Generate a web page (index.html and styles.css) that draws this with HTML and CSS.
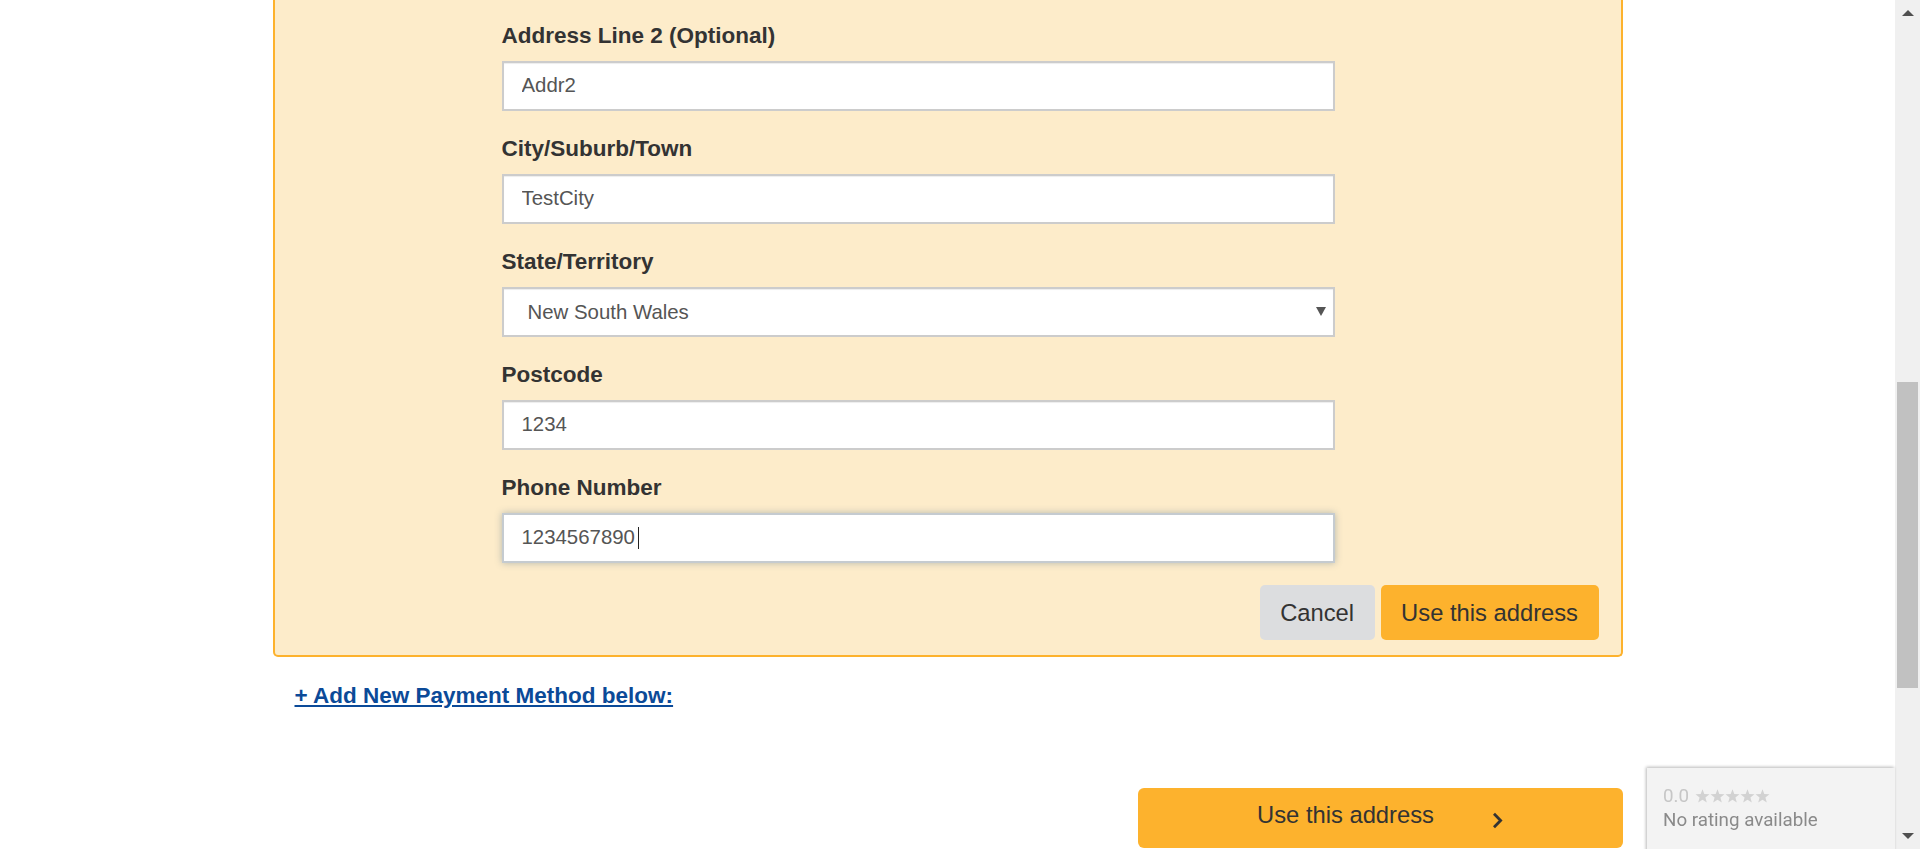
FILE: index.html
```html
<!DOCTYPE html>
<html lang="en">
<head>
<meta charset="utf-8">
<title>Checkout – Delivery address</title>
<link rel="stylesheet" href="styles.css">
</head>
<body>
<div class="viewport">
  <main class="page">
    <div class="container">
      <section class="address-card">
        <form class="address-form">
          <div class="form-group">
            <label class="form-label" for="addr2">Address Line 2 (Optional)</label>
            <input class="form-control" id="addr2" type="text" value="Addr2">
          </div>
          <div class="form-group">
            <label class="form-label" for="city">City/Suburb/Town</label>
            <input class="form-control" id="city" type="text" value="TestCity">
          </div>
          <div class="form-group">
            <label class="form-label" for="state">State/Territory</label>
            <div class="select-wrap">
              <select class="form-control form-select" id="state">
                <option selected>New South Wales</option>
                <option>Victoria</option>
                <option>Queensland</option>
              </select>
              <span class="select-arrow"></span>
            </div>
          </div>
          <div class="form-group">
            <label class="form-label" for="postcode">Postcode</label>
            <input class="form-control" id="postcode" type="text" value="1234">
          </div>
          <div class="form-group">
            <label class="form-label" for="phone">Phone Number</label>
            <div class="input-wrap">
              <input class="form-control is-focused" id="phone" type="text" value="1234567890">
              <span class="text-caret"></span>
            </div>
          </div>
        </form>
        <div class="card-actions">
          <button type="button" class="btn btn-cancel">Cancel</button>
          <button type="button" class="btn btn-primary">Use this address</button>
        </div>
      </section>

      <div class="add-payment-row">
        <a class="add-payment" href="#">+ Add New Payment Method below:</a>
      </div>

      <div class="checkout-actions">
        <button type="button" class="btn-continue">
          <span class="btn-continue-label">Use this address</span>
          <svg class="chevron" width="11" height="17" viewBox="0 0 11 17" aria-hidden="true">
            <polyline points="2,1.8 8.6,8.5 2,15.2" fill="none" stroke="#333" stroke-width="2.8" stroke-linecap="butt" stroke-linejoin="miter"/>
          </svg>
        </button>
      </div>
    </div>
  </main>

  <div class="scrollbar" aria-hidden="true">
    <div class="sb-btn"><span class="sb-arrow-up"></span></div>
    <div class="sb-track"><div class="sb-thumb"></div></div>
    <div class="sb-btn"><span class="sb-arrow-down"></span></div>
  </div>
</div>

<aside class="rating-badge">
  <div class="rating-line">
    <span class="rating-score">0.0</span>
    <svg class="rating-stars" width="76" height="14" viewBox="0 0 76 14" aria-hidden="true">
      <defs>
        <polygon id="star" points="7.5,0.3 9.3,5.1 14.5,5.3 10.4,8.5 11.8,13.6 7.5,10.7 3.2,13.6 4.6,8.5 0.5,5.3 5.7,5.1"/>
      </defs>
      <use href="#star" x="0" fill="#d2d2d2"/>
      <use href="#star" x="15" fill="#d2d2d2"/>
      <use href="#star" x="30" fill="#d2d2d2"/>
      <use href="#star" x="45" fill="#d2d2d2"/>
      <use href="#star" x="60" fill="#d2d2d2"/>
    </svg>
  </div>
  <div class="rating-text">No rating available</div>
</aside>
</body>
</html>
```

FILE: styles.css
```css
* {
  box-sizing: border-box;
}

html,
body {
  margin: 0;
  padding: 0;
  height: 100%;
}

body {
  font-family: "Liberation Sans", Arial, Helvetica, sans-serif;
  color: #333;
  background: #fff;
  overflow: hidden;
}

.viewport {
  display: flex;
  height: 849px;
}

.page {
  flex: 1;
  min-width: 0;
}

.container {
  width: 1350px;
  margin: 0 auto;
}

/* ---------- address card ---------- */
.address-card {
  background: #fdecca;
  border: 2px solid #fdb22d;
  border-top: 0;
  border-radius: 0 0 5px 5px;
  padding: 22.5px 22px 15px 227px;
}

.address-form {
  width: 833px;
  display: flex;
  flex-direction: column;
  gap: 25px;
}

.form-group {
  display: flex;
  flex-direction: column;
}

.form-label {
  display: block;
  font-size: 22.5px;
  font-weight: 700;
  line-height: 26px;
  margin-bottom: 12px;
  color: #333;
}

.form-control {
  display: block;
  width: 100%;
  height: 50px;
  margin: 0;
  padding: 0 18px;
  border: 2px solid #cccccc;
  border-radius: 0;
  background: #fff;
  font-family: inherit;
  font-size: 20.4px;
  color: #555;
  box-shadow: inset 0 1px 1px rgba(0, 0, 0, 0.075);
  outline: none;
}

.select-wrap,
.input-wrap {
  position: relative;
}

.form-select {
  appearance: none;
  -webkit-appearance: none;
  padding-left: 24px;
  cursor: pointer;
}

.select-arrow {
  position: absolute;
  right: 9px;
  top: 20.5px;
  width: 0;
  height: 0;
  border-left: 5px solid transparent;
  border-right: 5px solid transparent;
  border-top: 9px solid #555;
  pointer-events: none;
}

.form-control.is-focused {
  border-color: #c5cbd0;
  box-shadow: 0 0 7px rgba(90, 120, 140, 0.45);
}

.text-caret {
  position: absolute;
  left: 136px;
  top: 14px;
  width: 1px;
  height: 22px;
  background: #222;
}

.card-actions {
  display: flex;
  justify-content: flex-end;
  gap: 6px;
  margin-top: 22.5px;
}

.btn {
  height: 55px;
  padding: 0 20.5px;
  border: 0;
  border-radius: 5px;
  font-family: inherit;
  font-size: 23.75px;
  color: #333;
  cursor: pointer;
}

.btn-cancel {
  background: #dcdddf;
}

.btn-primary {
  background: #fdb22d;
}

/* ---------- link ---------- */
.add-payment-row {
  margin-top: 25.5px;
  padding-left: 22px;
  line-height: 26px;
}

.add-payment {
  font-size: 22.5px;
  font-weight: 700;
  color: #0b4a98;
  text-decoration: underline;
}

/* ---------- continue button ---------- */
.checkout-actions {
  display: flex;
  justify-content: flex-end;
  margin-top: 77.5px;
}

.btn-continue {
  width: 485px;
  height: 60px;
  display: flex;
  justify-content: center;
  align-items: flex-start;
  padding: 12.5px 0 0;
  border: 0;
  border-radius: 6px;
  background: #fdb22d;
  font-family: inherit;
  font-size: 23.75px;
  color: #333;
  cursor: pointer;
}

.btn-continue-label {
  line-height: 27px;
}

.chevron {
  display: block;
  margin-left: 58px;
  margin-top: 11.5px;
}

/* ---------- fake window scrollbar ---------- */
.scrollbar {
  width: 25px;
  height: 849px;
  background: #f0f0f0;
  display: flex;
  flex-direction: column;
  flex-shrink: 0;
}

.sb-btn {
  height: 25px;
  display: flex;
  align-items: center;
  justify-content: center;
}

.sb-arrow-up {
  width: 0;
  height: 0;
  border-left: 6px solid transparent;
  border-right: 6px solid transparent;
  border-bottom: 6px solid #505050;
}

.sb-arrow-down {
  width: 0;
  height: 0;
  border-left: 6px solid transparent;
  border-right: 6px solid transparent;
  border-top: 6px solid #505050;
  margin-top: -2px;
}

.sb-track {
  flex: 1;
  padding: 357px 2px 0;
}

.sb-thumb {
  height: 306px;
  background: #c1c1c1;
}

/* ---------- rating badge (overlay) ---------- */
.rating-badge {
  position: fixed;
  top: 768px;
  right: 25px;
  width: 248px;
  height: 100px;
  padding: 16px 16px 0;
  background: #f3f3f3;
  box-shadow: -1px -1px 3px rgba(0, 0, 0, 0.28);
  font-family: Roboto, "Liberation Sans", Arial, sans-serif;
  font-size: 18.75px;
  line-height: 24px;
}

.rating-line {
  display: flex;
  align-items: center;
  gap: 6px;
}

.rating-score {
  color: #c6c6c6;
}

.rating-stars {
  display: block;
  margin-top: -1px;
}

.rating-text {
  color: #8a8a8a;
}
```
